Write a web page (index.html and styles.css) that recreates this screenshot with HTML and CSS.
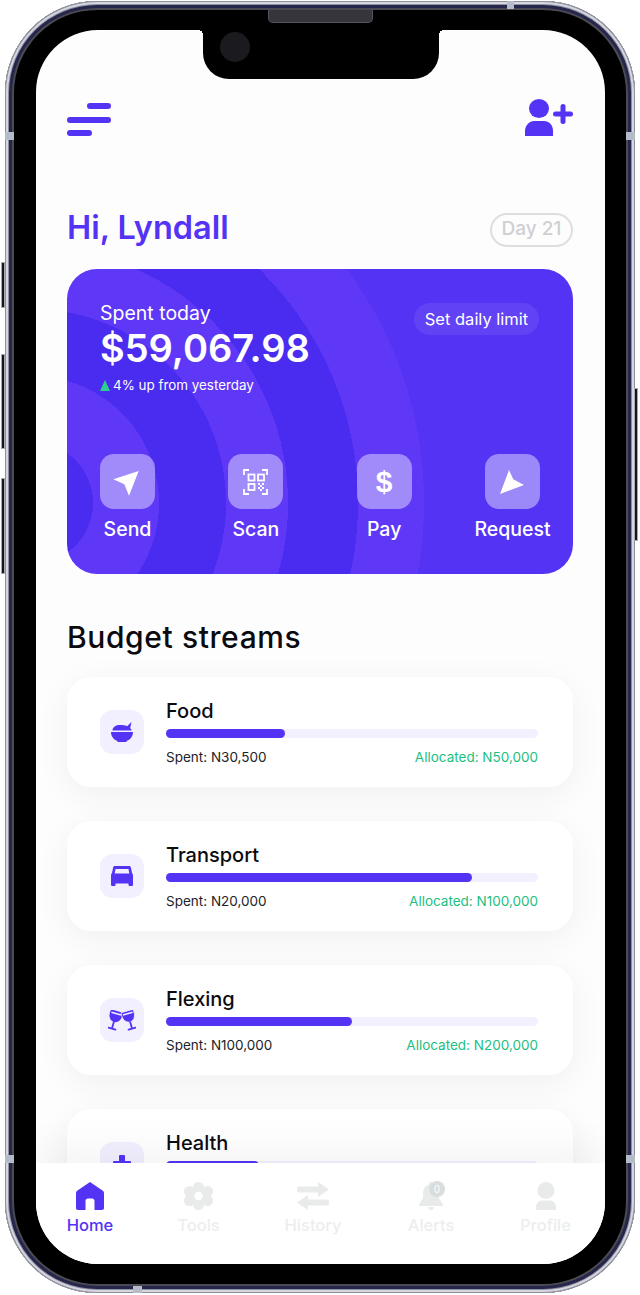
FILE: index.html
```html
<!DOCTYPE html>
<html>
<head>
  <title>Budget app</title>
  <link rel="stylesheet" href="styles.css">
</head>
<body>

  <div class="phone">
    <span class="side-btn side-mute"></span>
    <span class="side-btn side-up"></span>
    <span class="side-btn side-down"></span>
    <span class="side-btn side-power"></span>
    <span class="band band-top"></span>
    <span class="band band-bottom"></span>
    <span class="band band-left-a"></span>
    <span class="band band-left-b"></span>
    <span class="band band-right-a"></span>
    <span class="band band-right-b"></span>
    <span class="speaker"></span>

    <div class="screen">
      <div class="notch"><span class="camera"></span></div>

      <main class="content">
        <header class="topbar">
          <svg class="menu-icon" width="44" height="33" viewBox="0 0 44 33">
            <rect x="20" y="0" width="24" height="6" rx="3"/>
            <rect x="0" y="14" width="44" height="6" rx="3"/>
            <rect x="0" y="27" width="25" height="6" rx="3"/>
          </svg>
          <svg class="add-user" width="48" height="37" viewBox="0 0 48 37">
            <ellipse cx="14" cy="9.5" rx="10" ry="9.5"/>
            <path d="M0 37V32C0 26 5 22 9 22H19C24 22 28 26 28 32V37Z"/>
            <rect x="28" y="12.5" width="20" height="5" rx="2.5"/>
            <rect x="35.5" y="5" width="5" height="20" rx="2.5"/>
          </svg>
        </header>

        <div class="greeting">
          <h1>Hi, Lyndall</h1>
          <span class="day-pill">Day 21</span>
        </div>

        <section class="hero">
          <div class="hero-top">
            <div>
              <div class="hero-label">Spent today</div>
              <div class="hero-amount">$59,067.98</div>
              <div class="hero-note"><span class="up-arrow"></span>4% up from yesterday</div>
            </div>
            <span class="limit-pill">Set daily limit</span>
          </div>

          <div class="actions">
            <div class="action">
              <div class="action-icon">
                <svg width="55" height="55" viewBox="0 0 55 55"><path d="M38.7 17L13.3 25.3L24.3 30.3L29 41.7Z"/></svg>
              </div>
              <span>Send</span>
            </div>
            <div class="action">
              <div class="action-icon">
                <svg width="55" height="55" viewBox="0 0 55 55">
                  <path class="qr-line" d="M16 21V16H21M34 16H39V21M39 35V40H34M21 40H16V35"/>
                  <rect class="qr-line" x="20.5" y="20.5" width="6" height="6"/>
                  <rect class="qr-line" x="30" y="20.5" width="6" height="6"/>
                  <rect class="qr-line" x="20.5" y="30" width="6" height="6"/>
                  <path d="M30 29h2v2h-2zM34 29h2v2h-2zM32 31h2v2h-2zM30 33h2v2h-2zM34 33h2v2h-2zM32 35h2v2h-2z"/>
                </svg>
              </div>
              <span>Scan</span>
            </div>
            <div class="action">
              <div class="action-icon dollar">$</div>
              <span>Pay</span>
            </div>
            <div class="action">
              <div class="action-icon">
                <svg width="55" height="55" viewBox="0 0 55 55"><path d="M24 16L28.3 25.3L39 31L15 40Z"/></svg>
              </div>
              <span>Request</span>
            </div>
          </div>
        </section>

        <h2 class="section-title">Budget streams</h2>

        <div class="streams">
          <article class="stream">
            <div class="stream-icon">
              <svg width="22" height="20" viewBox="0 0 22 20">
                <path d="M1.500 8.500C1.500 5 5 3 9 3C12 3 14 3.200 16 4.200L20.500 0L19.200 6C20 7 20.500 7.500 20.500 8.500Z"/>
                <path d="M0 10H22C22 14.500 19 18 15.500 19V20H6.500V19C3 18 0 14.500 0 10Z"/>
              </svg>
            </div>
            <div class="stream-body">
              <div class="stream-name">Food</div>
              <div class="bar"><div class="bar-fill" style="width: 32%"></div></div>
              <div class="stream-meta"><span>Spent: N30,500</span><span class="allocated">Allocated: N50,000</span></div>
            </div>
          </article>

          <article class="stream">
            <div class="stream-icon">
              <svg width="22" height="20" viewBox="0 0 22 20">
                <path fill-rule="evenodd" d="M4 0H18C19 0 19.700 .6 20 2L21 7C21.700 7.600 22 8.500 22 10V18.500C22 19.500 21.500 20 20.500 20H18.500C18 20 17.500 19.500 17.500 18.500V17.500H4.500V18.500C4.500 19.500 4 20 3.500 20H1.500C.5 20 0 19.500 0 18.500V10C0 8.500 .3 7.600 1 7L2 2C2.300 .6 3 0 4 0ZM4.500 3L3.700 7.500H18.300L17.500 3Z"/>
              </svg>
            </div>
            <div class="stream-body">
              <div class="stream-name">Transport</div>
              <div class="bar"><div class="bar-fill" style="width: 82.3%"></div></div>
              <div class="stream-meta"><span>Spent: N20,000</span><span class="allocated">Allocated: N100,000</span></div>
            </div>
          </article>

          <article class="stream">
            <div class="stream-icon">
              <svg width="28" height="21" viewBox="0 0 28 21">
                <g transform="translate(9 1) rotate(16)">
                  <path d="M-6 0H6C7.500 6 5 11 0 11.500C-5 11 -7.500 6 -6 0Z"/>
                  <rect class="wine-gap" x="-5" y="2" width="10" height="1.400"/>
                  <rect x="-.9" y="11" width="1.800" height="7"/>
                  <rect x="-4.500" y="17.500" width="9" height="1.800" rx=".9"/>
                </g>
                <g transform="translate(19 1) rotate(-16)">
                  <path class="wine-front" d="M-6 0H6C7.500 6 5 11 0 11.500C-5 11 -7.500 6 -6 0Z"/>
                  <rect class="wine-gap" x="-5" y="2" width="10" height="1.400"/>
                  <rect x="-.9" y="11" width="1.800" height="7"/>
                  <rect x="-4.500" y="17.500" width="9" height="1.800" rx=".9"/>
                </g>
              </svg>
            </div>
            <div class="stream-body">
              <div class="stream-name">Flexing</div>
              <div class="bar"><div class="bar-fill" style="width: 50%"></div></div>
              <div class="stream-meta"><span>Spent: N100,000</span><span class="allocated">Allocated: N200,000</span></div>
            </div>
          </article>

          <article class="stream">
            <div class="stream-icon">
              <svg width="18" height="18" viewBox="0 0 18 18">
                <rect x="6" y="0" width="6" height="18" rx="1"/>
                <rect x="0" y="6" width="18" height="6" rx="1"/>
              </svg>
            </div>
            <div class="stream-body">
              <div class="stream-name">Health</div>
              <div class="bar"><div class="bar-fill" style="width: 25%"></div></div>
              <div class="stream-meta"></div>
            </div>
          </article>
        </div>
      </main>

      <nav class="tabbar">
        <div class="tab active">
          <svg width="28" height="28" viewBox="0 0 28 28">
            <path d="M14 0L26.500 8.500C27.500 9.200 28 10 28 11.500V26C28 27.300 27.300 28 26 28H18.500V19C18.500 17.500 17.500 16.500 16 16.500H12C10.500 16.500 9.500 17.500 9.500 19V28H2C.7 28 0 27.300 0 26V11.500C0 10 .5 9.200 1.500 8.500Z"/>
          </svg>
          <span>Home</span>
        </div>
        <div class="tab">
          <svg width="29" height="28" viewBox="0 0 29 28">
            <circle cx="14.500" cy="5.500" r="5.500"/>
            <circle cx="14.500" cy="22.500" r="5.500"/>
            <circle cx="5.500" cy="9.500" r="5.500"/>
            <circle cx="23.500" cy="9.500" r="5.500"/>
            <circle cx="5.500" cy="18.500" r="5.500"/>
            <circle cx="23.500" cy="18.500" r="5.500"/>
            <circle cx="14.500" cy="14" r="9"/>
            <circle class="gear-hole" cx="14.500" cy="14" r="4.200"/>
          </svg>
          <span>Tools</span>
        </div>
        <div class="tab">
          <svg width="32" height="28" viewBox="0 0 32 28">
            <path d="M21 0L32 7.500L21 15V10.500H2C.7 10.500 0 9.800 0 8.500V6.500C0 5.200 .7 4.500 2 4.500H21Z"/>
            <path d="M11 13L0 20.500L11 28V23.500H30C31.300 23.500 32 22.800 32 21.500V19.500C32 18.200 31.300 17.500 30 17.500H11Z"/>
          </svg>
          <span>History</span>
        </div>
        <div class="tab">
          <div class="bell">
            <svg width="24" height="28" viewBox="0 0 24 28">
              <path d="M12 0C13 0 14 1 14 2.500C18 3.500 20 7 20 11V16L24 22.500V24H0V22.500L4 16V11C4 7 6 3.500 10 2.500C10 1 11 0 12 0Z"/>
              <path d="M9 25H15C15 27 13.500 28 12 28C10.500 28 9 27 9 25Z"/>
            </svg>
            <span class="badge">0</span>
          </div>
          <span>Alerts</span>
        </div>
        <div class="tab">
          <svg width="20" height="28" viewBox="0 0 20 28">
            <circle cx="10" cy="8.500" r="8.500"/>
            <path d="M0 28V25C0 21 3 18.500 6 18.500H14C17 18.500 20 21 20 25V28Z"/>
          </svg>
          <span>Profile</span>
        </div>
      </nav>
    </div>
  </div>

</body>
</html>
```

FILE: styles.css
```css
* {
  box-sizing: border-box;
}

body {
  margin: 0;
  background: white;
  font-family: "Inter", "Liberation Sans", sans-serif;
  height: 1295px;
  overflow: hidden;
}

/* device frame */
.phone {
  position: relative;
  width: 630px;
  height: 1292px;
  margin: 1px 0 0 5px;
  padding: 29px 30px 29px 31px;
  border-radius: 92px;
  background: black;
  box-shadow: inset 0 0 0 1px #8d8e9c, inset 0 0 0 3px #d5d6de, inset 0 0 0 4px #8f90a0, inset 0 0 0 7px #26264c, inset 0 0 0 9px #4a4a52;
}

.side-btn {
  position: absolute;
  width: 4px;
  background: #14141c;
  border: 1px solid #a9aab6;
}

.side-mute { left: -4px; top: 261px; height: 46px; }
.side-up { left: -4px; top: 353px; height: 95px; }
.side-down { left: -4px; top: 477px; height: 96px; }
.side-power { right: -3px; top: 387px; height: 153px; }

.band {
  position: absolute;
  background: #b4bbc9;
}

.band-top { left: 502px; top: 0; width: 7px; height: 8px; }
.band-bottom { left: 128px; bottom: 0; width: 9px; height: 7px; }
.band-left-a { left: 0; top: 131px; width: 9px; height: 8px; }
.band-left-b { left: 0; top: 1154px; width: 9px; height: 8px; }
.band-right-a { right: 0; top: 131px; width: 9px; height: 8px; }
.band-right-b { right: 0; top: 1154px; width: 9px; height: 8px; }

.speaker {
  position: absolute;
  top: 9px;
  left: 263px;
  width: 105px;
  height: 13px;
  border: 1px solid #55555f;
  border-top: 0;
  border-radius: 0 0 5px 5px;
  background: #35353b;
}

.screen {
  position: relative;
  display: flex;
  flex-direction: column;
  height: 100%;
  border-radius: 62px;
  background: #fdfdfd;
  overflow: hidden;
}

.notch {
  position: absolute;
  top: 0;
  left: 167px;
  width: 236px;
  height: 49px;
  background: black;
  border-radius: 0 0 26px 26px;
}

.notch::before,
.notch::after {
  content: "";
  position: absolute;
  top: 0;
  width: 5px;
  height: 5px;
}

.notch::before {
  left: -5px;
  background: radial-gradient(circle at 0 100%, transparent 5px, black 5px);
}

.notch::after {
  right: -5px;
  background: radial-gradient(circle at 100% 100%, transparent 5px, black 5px);
}

.camera {
  position: absolute;
  top: 2px;
  left: 17px;
  width: 30px;
  height: 30px;
  border-radius: 50%;
  background: #1b1b1f;
}

.content {
  flex: 1;
  min-height: 0;
  overflow: hidden;
  padding: 69px 32px 0 31px;
}

.topbar {
  display: flex;
  justify-content: space-between;
  align-items: flex-start;
  height: 37px;
}

.menu-icon {
  margin-top: 4px;
  fill: #5433f5;
}

.add-user {
  fill: #5433f5;
}

.greeting {
  display: flex;
  justify-content: space-between;
  align-items: center;
  margin-top: 77px;
  height: 34px;
}

h1 {
  margin: 0 0 4px;
  color: #5433f5;
  font-size: 32.5px;
  font-weight: 600;
  line-height: 30px;
}

.day-pill {
  width: 83px;
  height: 34px;
  border: 2px solid #dedede;
  border-radius: 17px;
  color: #cfcfd2;
  font-size: 19px;
  font-weight: 500;
  line-height: 28px;
  text-align: center;
}

/* purple card */
.hero {
  display: flex;
  flex-direction: column;
  justify-content: space-between;
  height: 305px;
  margin-top: 22px;
  padding: 32px 33px 33px;
  border-radius: 30px;
  color: white;
  background: radial-gradient(circle at -35px 234px,
    #4a2cf1 61px, #5e38f6 61px,
    #5e38f6 127px, #4a2cf1 127px,
    #4a2cf1 194px, #5e38f6 194px,
    #5e38f6 256px, #4a2cf1 256px,
    #4a2cf1 326px, #5e38f6 326px,
    #5e38f6 392px, #5433f5 392px);
}

.hero-top {
  display: flex;
  justify-content: space-between;
  align-items: flex-start;
}

.hero-label {
  font-size: 19.5px;
  line-height: 24px;
}

.hero-amount {
  font-size: 38px;
  font-weight: 600;
  line-height: 46px;
}

.hero-note {
  display: flex;
  align-items: center;
  margin-top: 5px;
  font-size: 13.4px;
  line-height: 18px;
}

.up-arrow {
  width: 0;
  height: 0;
  margin-right: 3px;
  border-left: 5.5px solid transparent;
  border-right: 5.5px solid transparent;
  border-bottom: 11px solid #2ccf8e;
}

.limit-pill {
  margin: 2px 1px 0 0;
  width: 125px;
  height: 32px;
  border-radius: 16px;
  background: rgba(255, 255, 255, 0.08);
  font-size: 16.5px;
  line-height: 32px;
  text-align: center;
}

.actions {
  display: flex;
  justify-content: space-between;
}

.action {
  display: flex;
  flex-direction: column;
  align-items: center;
  width: 55px;
  font-size: 19.5px;
  font-weight: 500;
  line-height: 23px;
  white-space: nowrap;
}

.action-icon {
  width: 55px;
  height: 55px;
  margin-bottom: 9px;
  border-radius: 14px;
  background: rgba(255, 255, 255, 0.42);
}

.action-icon svg {
  display: block;
  fill: white;
}

.qr-line {
  fill: none;
  stroke: white;
  stroke-width: 1.8;
}

.dollar {
  font-family: "Liberation Sans", sans-serif;
  font-size: 30px;
  font-weight: 700;
  line-height: 55px;
  text-align: center;
}

.section-title {
  margin: 46px 0 23px;
  color: #0b0b0f;
  font-size: 30px;
  font-weight: 500;
  letter-spacing: 0.6px;
  line-height: 34px;
}

/* budget rows */
.streams {
  display: flex;
  flex-direction: column;
  gap: 34px;
}

.stream {
  display: flex;
  align-items: center;
  flex-shrink: 0;
  gap: 22px;
  height: 110px;
  padding: 0 35px 0 33px;
  border-radius: 24px;
  background: white;
  box-shadow: 0 8px 34px rgba(0, 0, 0, 0.055);
}

.stream-icon {
  display: flex;
  align-items: center;
  justify-content: center;
  flex-shrink: 0;
  width: 44px;
  height: 44px;
  border-radius: 13px;
  background: #f2effe;
}

.stream-icon svg {
  fill: #5433f5;
}

.wine-gap {
  fill: #f2effe;
}

.wine-front {
  stroke: #f2effe;
  stroke-width: 0.8;
}

.stream-body {
  flex: 1;
}

.stream-name {
  padding-top: 1px;
  color: #0b0b0f;
  font-size: 20px;
  font-weight: 500;
  line-height: 24px;
}

.bar {
  height: 9px;
  margin-top: 6px;
  border-radius: 5px;
  background: #f2effe;
}

.bar-fill {
  height: 100%;
  border-radius: 5px;
  background: #5433f5;
}

.stream-meta {
  display: flex;
  justify-content: space-between;
  min-height: 18px;
  margin-top: 10px;
  color: #222228;
  font-size: 13.5px;
  line-height: 18px;
}

.allocated {
  color: #1cbf80;
}

/* bottom tabs */
.tabbar {
  position: relative;
  display: grid;
  grid-template-columns: 46px 41px 58px 48px 51px;
  column-gap: 65px;
  flex-shrink: 0;
  height: 101px;
  padding: 19px 0 0 31px;
  background: white;
  box-shadow: 0 -16px 40px rgba(0, 0, 0, 0.045);
}

.tab {
  display: flex;
  flex-direction: column;
  align-items: center;
  gap: 5px;
  color: #eceeee;
  font-size: 16.5px;
  font-weight: 500;
  line-height: 20px;
}

.tab svg {
  display: block;
  fill: #e9ebeb;
}

.tab .gear-hole {
  fill: white;
}

.tab.active {
  color: #5433f5;
}

.tab.active svg {
  fill: #5433f5;
}

.bell {
  position: relative;
}

.badge {
  position: absolute;
  top: -1px;
  right: -2px;
  width: 16px;
  height: 16px;
  border-radius: 50%;
  background: #d9dddd;
  color: white;
  font-size: 10px;
  font-weight: 400;
  line-height: 16px;
  text-align: center;
}
```
